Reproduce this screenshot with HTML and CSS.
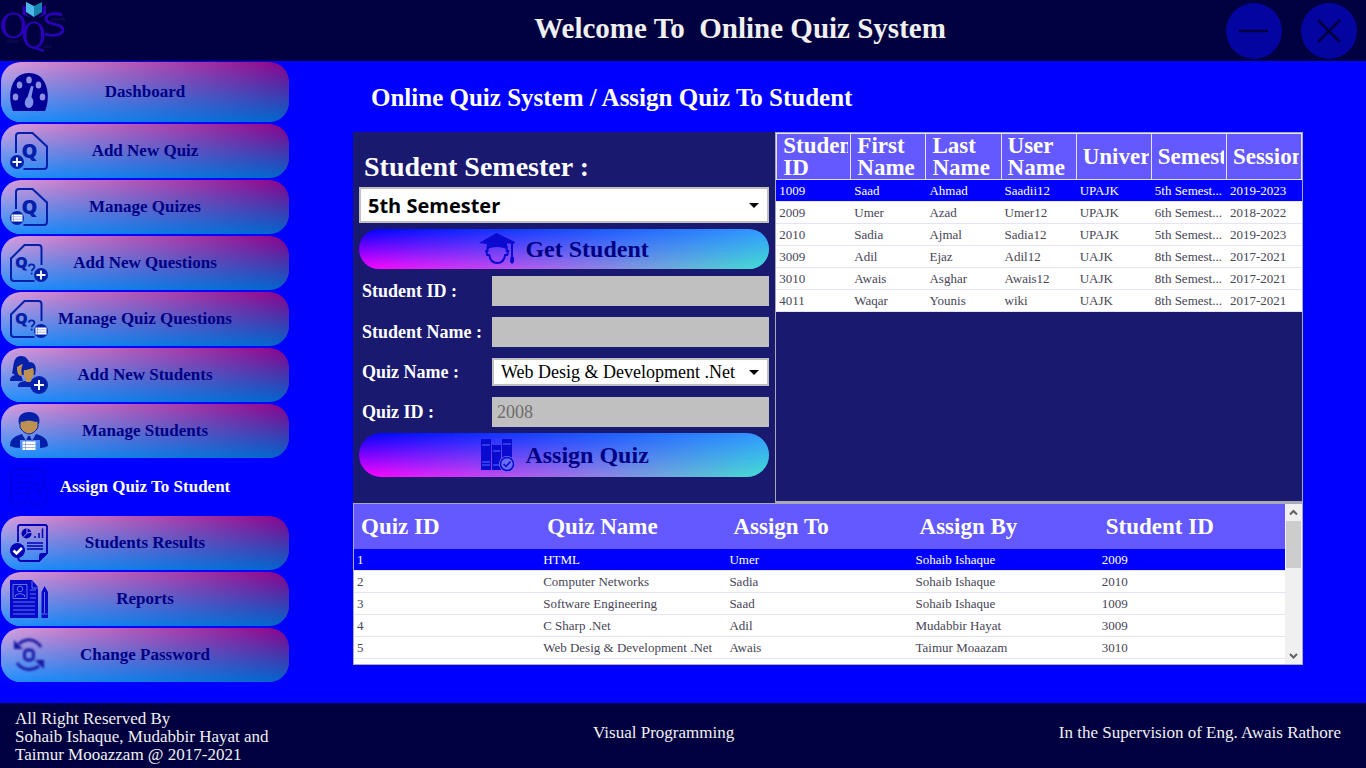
FILE: index.html
```html
<!DOCTYPE html>
<html lang="en">
<head>
<meta charset="utf-8">
<title>Online Quiz System</title>
<link rel="stylesheet" href="styles.css">
</head>
<body>
<svg class="defs" aria-hidden="true">
  <symbol id="plus-badge" viewBox="0 0 14 14"><circle cx="7" cy="7" r="7" fill="#0320aa"/><path d="M7 2.5v9M2.5 7h9" stroke="#fff" stroke-width="1.8"/></symbol>
  <symbol id="list-badge" viewBox="0 0 14 14"><circle cx="7" cy="7" r="7" fill="#0320aa"/><path d="M1.500 3.500h11v7h-11z" fill="#fff"/><path d="M3.500 3.500v7M2 5.800h10M2 8.200h10" stroke="#6f83d8" stroke-width=".6"/></symbol>
  <symbol id="quiz-sheet" viewBox="0 0 38 38">
    <path d="M6 21V4a3 3 0 0 1 3-3h13.500L37 14.500V34a3 3 0 0 1-3 3H13.500" fill="none" stroke="#0320aa" stroke-width="2"/>
  </symbol>
  <symbol id="question-sheet" viewBox="0 0 38 38">
    <path d="M31.500 21V4a3 3 0 0 0-3-3H14.500L1 14.500V34a3 3 0 0 0 3 3h20.500" fill="none" stroke="#0320aa" stroke-width="2"/>
    <path d="M18.500 22.500c.5-3 6-3 6 .3 0 2.400-2.800 2-2.800 4.500M21.700 28.800v1.600" fill="none" stroke="#0320aa" stroke-width="1.700"/>
  </symbol>
</svg>

<header class="topbar">
  <svg class="logo" viewBox="0 0 66 54" role="img" aria-label="OQS">
    <path d="M22.500 5l3.500 2v7l5 4-8.500-3.500zM46 5l-3.500 2v7L37.500 18l8.500-3.500z" fill="#2a00b8"/>
    <path d="M26 2l8 4v11l-8-5z" fill="#4bb9e8"/><path d="M42 2l-8 4v11l8-5z" fill="#1684ae"/>
    <path fill-rule="evenodd" d="M13.500 12.500c7 0 12 5.500 12 13s-5 12.800-12 12.800-12.300-5.300-12.300-12.800 5.300-13 12.300-13zm0 1.800c-5 0-8.300 4.500-8.300 11.200s3.300 11 8.300 11 8.300-4.300 8.300-11-3.300-11.200-8.300-11.200z" fill="#2a00b8"/>
    <path fill-rule="evenodd" d="M34 21.500c6 0 10.500 5.500 10.500 13.500S40 48.500 34 48.500 23 43 23 35s5-13.500 11-13.500zm0 1.800c-4.500 0-7.500 4.700-7.500 11.700s3 11.700 7.500 11.700S41 42 41 35s-2.500-11.700-7-11.700z" fill="#2a00b8"/>
    <path d="M32 47.500c4-1 7 3 12 3" fill="none" stroke="#2a00b8" stroke-width="2.500"/>
    <path d="M62 15c-5-2-15-2-16 3.500-.5 7 17.500 4.500 17 11.500-1 6.500-13 6-18 4" fill="none" stroke="#2a00b8" stroke-width="2.800"/>
    <text x="7" y="43" class="logo-text">nline</text><text x="44" y="48" class="logo-text">uiz</text><text x="51" y="21" class="logo-text">ystem</text>
  </svg>
  <h1>Welcome To&nbsp; Online Quiz System</h1>
  <div class="window-controls">
    <button type="button" aria-label="Minimize"><svg viewBox="0 0 56 56"><path d="M13 28h29" stroke="#000040" stroke-width="2.500"/></svg></button>
    <button type="button" aria-label="Close"><svg viewBox="0 0 56 56"><path d="M17 17l22 22M39 17L17 39" stroke="#000040" stroke-width="2.500"/></svg></button>
  </div>
</header>

<div class="body">
  <nav class="sidebar">
    <button type="button" class="nav-item nav-first">
      <svg viewBox="0 0 38 38"><path d="M3 38C-3 24 0 0 19 0s22 24 16 38z" fill="#000096"/><g fill="#8d8ee0"><ellipse cx="19" cy="7" rx="2.800" ry="3.500"/><ellipse cx="9.500" cy="12" rx="2.800" ry="3.500"/><ellipse cx="28.500" cy="12" rx="2.800" ry="3.500"/><ellipse cx="5.500" cy="24" rx="2.800" ry="3.500"/><ellipse cx="32.500" cy="24" rx="2.800" ry="3.500"/><path d="M21 13l2.500.5-2 10.500c4 5 1 11-2.500 11-4.500 0-6-7-1.500-11z" fill="#7f90ea"/></g></svg>
      <span>Dashboard</span></button>
    <button type="button" class="nav-item">
      <svg viewBox="0 0 38 38"><use href="#quiz-sheet" width="38" height="38"/><text x="19.500" y="26" class="q-letter">Q</text><use href="#plus-badge" x="0" y="23" width="14" height="14"/></svg>
      <span>Add New Quiz</span></button>
    <button type="button" class="nav-item">
      <svg viewBox="0 0 38 38"><use href="#quiz-sheet" width="38" height="38"/><text x="19.500" y="26" class="q-letter">Q</text><use href="#list-badge" x="0" y="23" width="14" height="14"/></svg>
      <span>Manage Quizes</span></button>
    <button type="button" class="nav-item">
      <svg viewBox="0 0 38 38"><use href="#question-sheet" width="38" height="38"/><text x="11.500" y="24" class="q-letter q-small">Q</text><use href="#plus-badge" x="24" y="24" width="14" height="14"/></svg>
      <span>Add New Questions</span></button>
    <button type="button" class="nav-item">
      <svg viewBox="0 0 38 38"><use href="#question-sheet" width="38" height="38"/><text x="11.500" y="24" class="q-letter q-small">Q</text><use href="#list-badge" x="24" y="24" width="14" height="14"/></svg>
      <span>Manage Quiz Questions</span></button>
    <button type="button" class="nav-item">
      <svg viewBox="0 0 38 38"><path d="M2 17C4 13 2 0 11 0c5 0 6 3 8 5L11 19l2 6H0c0-4 2-5 5-6zM8 31c0-5 3-5 7-6h8l5 6z" fill="#0320aa"/><path d="M7 11l5-3 3 3-3 9c-4 0-5-3-5-9z" fill="#be9150"/><path d="M12 19c-2-9 1-13 7-13s8 4 6 13z" fill="#0320aa"/><path d="M14 14c5 0 7-2 9-2 2 5 0 10-2 11v3h-5v-3c-2-2-3-5-2-9z" fill="#be9150"/><circle cx="29" cy="29" r="9" fill="#0320aa"/><path d="M29 24v10M24 29h10" stroke="#fff" stroke-width="2"/></svg>
      <span>Add New Students</span></button>
    <button type="button" class="nav-item">
      <svg viewBox="0 0 38 38"><path d="M9 12C7 4 12 0 19 0s12 4 10 12z" fill="#0320aa"/><path d="M10 9c3 1 6-1 9-1s6 2 9 1v5c0 4-6 8-9 8s-9-4-9-8z" fill="#be9150" stroke="#0320aa"/><path d="M12 22l4 7h6l4-7c6 2 12 4 12 12q-3 2-8 2V28H10v8q-6 0-10-2c0-8 6-10 12-12zM18 24h2l2 5h-6z" fill="#0320aa"/><path d="M12.500 29.500h13v9h-13z" fill="#fff"/><path d="M15.500 29.500v9M12.500 32.500h13M12.500 35.500h13" stroke="#7f98dc" stroke-width=".7"/></svg>
      <span>Manage Students</span></button>
    <button type="button" class="nav-item nav-active" aria-current="page">
      <svg viewBox="0 0 38 38" fill="none" stroke="#0000e2" stroke-width="1.500"><path d="M16 36H4q-3 0-3-3V4q0-3 3-3h27q3 0 3 3v13M6 8h19M6 14h17M6 20h9M6 26h6"/><circle cx="27.500" cy="26.500" r="10.500"/><path d="M24.500 24c0-5 6-4 6-1 0 3-3 3-3 5M27.500 30v2"/></svg>
      <span>Assign Quiz To Student</span></button>
    <button type="button" class="nav-item">
      <svg viewBox="0 0 38 38"><path d="M8 18V3q0-2 2-2h25q2 0 2 2v26l-8 8H11q-3 0-3-5" fill="none" stroke="#0000b4" stroke-width="1.800"/><path d="M29 38v-6q0-3 3-3h6z" fill="#0000b4"/><circle cx="16.500" cy="9.500" r="5" fill="#0000b4"/><path d="M17 9V4M17 9l5-1M17 9l-3.500 4" stroke="#a88bdb"/><path d="M25 14v-2M29 14V9M32.500 14V4.500M17 19h16M17 22h16M17 25h16" stroke="#0000b4" stroke-width="1.500"/><circle cx="7.500" cy="26.500" r="7.500" fill="#0000b4"/><path d="M3.500 26.500l3 3 5.500-5.500" fill="none" stroke="#fff" stroke-width="2.600"/></svg>
      <span>Students Results</span></button>
    <button type="button" class="nav-item">
      <svg viewBox="0 0 38 38"><path d="M0 0h22l6 7v31H0zM31.500 12l3-6 3.500 6v26h-6.500z" fill="#0808cc"/><g fill="none" stroke="#5a74e4"><path d="M3 4.500h14v14H3zM5.500 17v-2q5-3 9 0v2M22 1v7h6M20 10h6M20 14h6M20 18h6M3 22h22M3 26h22M3 30h22M3 34h22M34.500 12v21M31.500 34h6"/><circle cx="10" cy="9" r="2.800"/></g></svg>
      <span>Reports</span></button>
    <button type="button" class="nav-item">
      <svg class="soft" viewBox="0 0 38 38" fill="none" stroke="#1717a2" stroke-width="2.800"><path d="M9 8c6-6 16-6 22 3M29 30c-6 5-16 5-22-3"/><path d="M4 4v9h9zM34 33v-9h-9z" fill="#1717a2" stroke="none"/><rect x="14.500" y="14" width="9" height="10" rx="3"/></svg>
      <span>Change Password</span></button>
  </nav>

  <main>
    <h2>Online Quiz System / Assign Quiz To Student</h2>
    <div class="workspace">
      <form class="assign-form">
        <label class="semester-label" for="semester">Student Semester :</label>
        <div class="select-box semester"><select id="semester"><option>5th Semester</option></select></div>
        <button type="button" class="action">
          <svg viewBox="0 0 36 34"><path d="M0 11L17.500 1 36 10l-1 2-8-1q-9-3-19 1z" fill="#0a0ad0"/><path d="M33 11v16" stroke="#0a0ad0" stroke-width="2"/><path d="M8.500 14v5H7.200l1 4h2c1 6 4 8 8 8s7-2 8-8h2l1-4h-1.500v-5" fill="none" stroke="#0a0ad0" stroke-width="2"/><path d="M8 11q10-4 20 0v6q-10-4-20 0zM31.500 25h3.500v5l-2 2-2-2z" fill="#0a0ad0"/></svg>
          <span>Get Student</span></button>
        <div class="fields">
          <label for="student-id">Student ID :</label><input id="student-id" type="text" disabled>
          <label for="student-name">Student Name :</label><input id="student-name" type="text" disabled>
          <label for="quiz-name">Quiz Name :</label><div class="select-box"><select id="quiz-name"><option>Web Desig &amp; Development .Net</option></select></div>
          <label for="quiz-id">Quiz ID :</label><input id="quiz-id" type="text" value="2008" disabled>
        </div>
        <button type="button" class="action action-assign">
          <svg viewBox="0 0 36 34"><path d="M2 1h10v31H2zM13 7h9v25h-9zM23 1h10v30H23z" fill="#0a0ad0"/><path d="M3 7h8M3 24h8M3 27h8M14 13h7M14 27h7M24 6h8" stroke="#536fff" stroke-width="1"/><circle cx="28" cy="26" r="8" fill="#6a6cf4"/><circle cx="28" cy="26" r="6.500" fill="none" stroke="#0a0ad0" stroke-width="1.500"/><path d="M24.500 26l2.500 2.500 4.500-5" fill="none" stroke="#0a0ad0" stroke-width="1.500"/></svg>
          <span>Assign Quiz</span></button>
      </form>

      <section class="students">
        <table>
          <thead><tr><th><div>Student ID</div></th><th><div>First Name</div></th><th><div>Last Name</div></th><th><div>User Name</div></th><th><div>University</div></th><th><div>Semester</div></th><th><div>Session</div></th></tr></thead>
          <tbody>
            <tr class="selected"><td>1009</td><td>Saad</td><td>Ahmad</td><td>Saadii12</td><td>UPAJK</td><td>5th Semest...</td><td>2019-2023</td></tr>
            <tr><td>2009</td><td>Umer</td><td>Azad</td><td>Umer12</td><td>UPAJK</td><td>6th Semest...</td><td>2018-2022</td></tr>
            <tr><td>2010</td><td>Sadia</td><td>Ajmal</td><td>Sadia12</td><td>UPAJK</td><td>5th Semest...</td><td>2019-2023</td></tr>
            <tr><td>3009</td><td>Adil</td><td>Ejaz</td><td>Adil12</td><td>UAJK</td><td>8th Semest...</td><td>2017-2021</td></tr>
            <tr><td>3010</td><td>Awais</td><td>Asghar</td><td>Awais12</td><td>UAJK</td><td>8th Semest...</td><td>2017-2021</td></tr>
            <tr><td>4011</td><td>Waqar</td><td>Younis</td><td>wiki</td><td>UAJK</td><td>8th Semest...</td><td>2017-2021</td></tr>
          </tbody>
        </table>
      </section>

      <section class="quizzes">
        <table>
          <thead><tr><th>Quiz ID</th><th>Quiz Name</th><th>Assign To</th><th>Assign By</th><th>Student ID</th></tr></thead>
          <tbody>
            <tr class="selected"><td>1</td><td>HTML</td><td>Umer</td><td>Sohaib Ishaque</td><td>2009</td></tr>
            <tr><td>2</td><td>Computer Networks</td><td>Sadia</td><td>Sohaib Ishaque</td><td>2010</td></tr>
            <tr><td>3</td><td>Software Engineering</td><td>Saad</td><td>Sohaib Ishaque</td><td>1009</td></tr>
            <tr><td>4</td><td>C Sharp .Net</td><td>Adil</td><td>Mudabbir Hayat</td><td>3009</td></tr>
            <tr><td>5</td><td>Web Desig &amp; Development .Net</td><td>Awais</td><td>Taimur Moaazam</td><td>3010</td></tr>
          </tbody>
        </table>
        <div class="scrollbar">
          <button type="button" aria-label="Scroll up"><svg viewBox="0 0 17 17"><path d="M5 10.500L8.500 7l3.500 3.500" fill="none" stroke="#606060" stroke-width="2"/></svg></button>
          <div class="thumb"></div>
          <button type="button" aria-label="Scroll down"><svg viewBox="0 0 17 17"><path d="M5 7l3.500 3.500L12 7" fill="none" stroke="#606060" stroke-width="2"/></svg></button>
        </div>
      </section>
    </div>
  </main>
</div>

<footer>
  <p>All Right Reserved By<br>Sohaib Ishaque, Mudabbir Hayat and<br>Taimur Mooazzam @ 2017-2021</p>
  <p>Visual Programming</p>
  <p>In the Supervision of Eng. Awais Rathore</p>
</footer>
</body>
</html>
```

FILE: styles.css
```css
* { box-sizing: border-box; }

body {
  margin: 0;
  min-height: 100vh;
  display: flex;
  flex-direction: column;
  background: #0000ff;
  color: #fff;
  font-family: "Liberation Serif", serif;
}

h1, h2, p { margin: 0; }
button, input, select { font-family: inherit; }
button { border: 0; padding: 0; cursor: pointer; }
svg { display: block; }

.defs { position: absolute; width: 0; height: 0; }
.q-letter { font: 900 20px "Noto Sans", sans-serif; fill: #0320aa; text-anchor: middle; }
.q-small { font-size: 16px; }

.topbar {
  display: grid;
  grid-template-columns: 290px 1fr 176px;
  align-items: center;
  height: 61px;
  background: #000040;
}
.logo { width: 66px; height: 54px; align-self: start; }
.logo-text { font-size: 6px; fill: #1c1468; }
.topbar h1 {
  padding-bottom: 6px;
  text-align: center;
  font-size: 29px;
  line-height: 32px;
  color: #f0f0f0;
}
.window-controls { display: flex; justify-content: flex-end; gap: 19px; padding-right: 9px; }
.window-controls button { width: 56px; height: 56px; border-radius: 50%; background: #0404a0; }

.body { flex: 1; display: grid; grid-template-columns: 290px 1fr; }

.sidebar { display: flex; flex-direction: column; gap: 2px; padding: 1px; }
.nav-item, .action {
  position: relative;
  isolation: isolate;
  overflow: hidden;
  color: #000084;
  font-weight: bold;
}
.nav-item {
  display: grid;
  align-items: center;
  height: 54px;
  border-radius: 20px;
  background: linear-gradient(to right, #dda0dd, #8b008b);
  font-size: 17px;
}
.nav-item::before, .action::before {
  content: "";
  position: absolute;
  inset: 0;
  z-index: -1;
  mask-image: linear-gradient(transparent, #000);
}
.nav-item::before { background: linear-gradient(to right, #1e90ff, #0066cc); }
.nav-item > * { grid-area: 1 / 1; }
.nav-item svg { width: 38px; height: 38px; margin-left: 9px; }
.nav-first { height: 60px; }
.nav-active { background: transparent; color: #fff; }
.nav-active::before { display: none; }
.soft { filter: blur(1px); }

main { padding: 22px 63px 38px; }
main h2 { padding-left: 18px; margin-bottom: 19px; font-size: 25px; line-height: 30px; }

.workspace { display: grid; grid-template-columns: 4fr 5fr; background: #191970; }

.assign-form { padding: 20px 6px 26px; }
.semester-label { display: block; padding-left: 5px; font-size: 28px; font-weight: bold; line-height: 30px; margin-bottom: 5px; }
.select-box { position: relative; border: 2px solid #c0c0c0; background: #fff; }
.select-box::after {
  content: "";
  position: absolute;
  right: 8px;
  top: 50%;
  margin-top: -2px;
  border: 5px solid transparent;
  border-top-color: #000;
  border-bottom: 0;
  pointer-events: none;
}
.select-box select {
  display: block;
  width: 100%;
  height: 24px;
  padding: 0 7px;
  border: 0;
  appearance: none;
  background: transparent;
  color: #000;
  font-size: 18px;
}
.semester select { height: 32px; font: bold 20px "Open Sans", sans-serif; }

.action {
  display: flex;
  justify-content: center;
  align-items: center;
  gap: 10px;
  width: 100%;
  height: 40px;
  border-radius: 20px;
  background: linear-gradient(to right, #0000ff, #3399ff);
  font-size: 24px;
}
.action::before { background: linear-gradient(to right, #ff00ff, #40e0d0); }
.action svg { width: 36px; height: 34px; }
.semester + .action { margin: 6px 0 7px; }
.action-assign { height: 44px; border-radius: 22px; margin-top: 6px; }

.fields { display: grid; grid-template-columns: 133px 1fr; row-gap: 11px; align-items: center; }
.fields label { padding-left: 3px; font-size: 18px; font-weight: bold; white-space: nowrap; }
.fields input {
  width: 100%;
  height: 30px;
  padding: 0 5px;
  border: 0;
  background: #c0c0c0;
  color: #6d6d6d;
  font-size: 18px;
}

table { width: 100%; border-collapse: separate; border-spacing: 0; table-layout: fixed; background: #fff; }
th { background: #6458ff; font-size: 23px; line-height: 23px; text-align: left; }
td {
  height: 22px;
  padding: 0 3px;
  border-bottom: 1px solid #e5e2fb;
  color: #474556;
  font-size: 13px;
  line-height: 21px;
  white-space: nowrap;
}
.selected td { background: #0000ff; color: #fff; }

.students { border: 1px solid #a9a9b4; border-bottom-width: 2px; }
.students th {
  height: 46px;
  padding: 0 2px 0 6px;
  border: 1px solid #e5e2fb;
  border-left-width: 0;
  border-top-width: 0;
}
.students table { border-top: 1px solid #e5e2fb; }
.students th:first-child { border-left-width: 1px; }
.students th div { overflow: hidden; max-height: 46px; line-height: 22px; padding-top: 1px; }

.quizzes {
  grid-column: 1 / -1;
  display: grid;
  grid-template-columns: 1fr 17px;
  min-height: 162px;
  border: 1px solid #a9a9b4;
  background: #fff;
}
.quizzes table { align-self: start; }
.quizzes th { height: 45px; padding: 0 7px; }
.scrollbar { display: flex; flex-direction: column; background: #f0f0f0; }
.scrollbar button { height: 17px; background: none; }
.scrollbar button:last-child { margin-top: auto; }
.scrollbar svg { width: 17px; height: 17px; }
.thumb { height: 47px; margin: 0 1px; background: #cdcdcd; }

footer {
  display: flex;
  justify-content: space-between;
  align-items: center;
  min-height: 65px;
  padding: 2px 25px 0 15px;
  background: #000040;
  color: #f0f0f0;
  font-size: 17px;
  line-height: 18px;
}
footer p:not(:first-child) { padding-bottom: 8px; }
```
